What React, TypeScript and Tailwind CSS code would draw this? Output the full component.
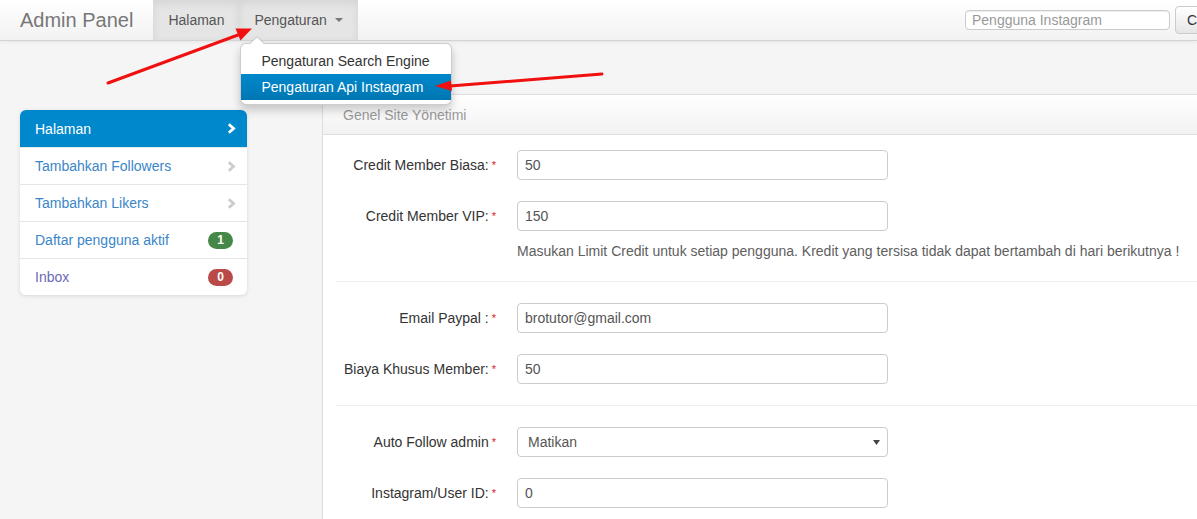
import React from 'react';

type Field = { label: string; value: string; select?: boolean };

const groupA: Field[] = [
  { label: 'Credit Member Biasa:', value: '50' },
  { label: 'Credit Member VIP:', value: '150' },
];

const groupB: Field[] = [
  { label: 'Email Paypal :', value: 'brotutor@gmail.com' },
  { label: 'Biaya Khusus Member:', value: '50' },
];

const groupC: Field[] = [
  { label: 'Auto Follow admin', value: 'Matikan', select: true },
  { label: 'Instagram/User ID:', value: '0' },
];

function Chevron({ color }: { color: string }) {
  return (
    <svg width="9" height="11" viewBox="0 0 9 11" className="shrink-0">
      <path d="M1.8 1.2 L6.6 5.5 L1.8 9.8" fill="none" stroke={color} strokeWidth="2.8" strokeLinejoin="miter" />
    </svg>
  );
}

function FormRow({ field }: { field: Field }) {
  return (
    <div className="flex items-center h-[30px]">
      <label className="w-[173px] text-right text-[#333] whitespace-nowrap">
        {field.label}
        <span className="text-[#e02020] text-[11px] align-top ml-[3px]">*</span>
      </label>
      {field.select ? (
        <div className="ml-[21px] w-[371px] h-[30px] border border-[#ccc] rounded-[4px] bg-white flex items-center justify-between pl-[10px] pr-[7px] text-[#555]">
          <span>{field.value}</span>
          <svg width="7" height="5" viewBox="0 0 7 5">
            <path d="M0 0 H7 L3.5 5 Z" fill="#444" />
          </svg>
        </div>
      ) : (
        <div className="ml-[21px] w-[371px] h-[30px] border border-[#ccc] rounded-[4px] bg-white flex items-center pl-[7px] text-[#555]">
          {field.value}
        </div>
      )}
    </div>
  );
}

const sideItems = [
  { label: 'Tambahkan Followers', chevron: true },
  { label: 'Tambahkan Likers', chevron: true },
  { label: 'Daftar pengguna aktif', badge: '1', badgeColor: 'bg-[#468847]' },
  { label: 'Inbox', badge: '0', badgeColor: 'bg-[#b94a48]', visited: true },
];

export default function App() {
  return (
    <div className="relative w-full h-[519px] overflow-hidden bg-[#f5f5f5] font-['Liberation_Sans',Arial,sans-serif] text-[14px] leading-[20px]">
      {/* Navbar */}
      <div className="relative z-20 h-[41px] flex items-stretch bg-gradient-to-b from-white to-[#f2f2f2] border-b border-[#d4d4d4] shadow-[0_1px_4px_rgba(0,0,0,0.065)]">
        <div className="pl-[20px] pr-[20px] flex items-center text-[20px] text-[#777]">Admin Panel</div>
        <div className="flex items-stretch">
          <div className="px-[15px] flex items-center bg-[#e5e5e5] text-[#555] shadow-[inset_0_3px_8px_rgba(0,0,0,0.08)]">Halaman</div>
          <div className="relative px-[15px] flex items-center bg-[#e5e5e5] text-[#555] shadow-[inset_0_3px_8px_rgba(0,0,0,0.08)]">
            Pengaturan
            <span className="ml-[8px] w-0 h-0 border-l-[4px] border-r-[4px] border-t-[4px] border-l-transparent border-r-transparent border-t-[#777]" />
            {/* Dropdown */}
            <div className="absolute left-[1px] top-[43px] w-[212px] bg-white border border-[rgba(0,0,0,0.2)] rounded-[6px] shadow-[0_5px_10px_rgba(0,0,0,0.2)] py-[4px] text-[#333]">
              <svg width="16" height="8" viewBox="0 0 16 8" className="absolute left-[8px] top-[-8px]">
                <path d="M0.5 8 L8 0.8 L15.5 8" fill="white" stroke="rgba(0,0,0,0.2)" strokeWidth="1" />
              </svg>
              <div className="h-[26px] px-[20px] flex items-center whitespace-nowrap">Pengaturan Search Engine</div>
              <div className="h-[26px] px-[20px] flex items-center whitespace-nowrap text-white bg-gradient-to-b from-[#0088cc] to-[#0077b3]">Pengaturan Api Instagram</div>
            </div>
          </div>
        </div>
        <div className="ml-auto mr-[-38px] flex items-center gap-[5px]">
          <div className="w-[205px] h-[20px] border border-[#ccc] rounded-[4px] bg-white flex items-center pl-[6px] text-[#999] shadow-[inset_0_1px_1px_rgba(0,0,0,0.075)]">
            Pengguna Instagram
          </div>
          <div className="w-[60px] h-[28px] border border-[#ccc] rounded-[4px] bg-gradient-to-b from-white to-[#e6e6e6] flex items-center pl-[11px] text-[#333]">
            Cari
          </div>
        </div>
      </div>

      {/* Body */}
      <div className="flex items-start pl-[20px]">
        {/* Sidebar */}
        <div className="w-[227px] shrink-0 mt-[69px] bg-white rounded-[6px] shadow-[0_1px_4px_rgba(0,0,0,0.12)] overflow-hidden">
          <div className="h-[37px] flex items-center justify-between pl-[15px] pr-[11px] bg-[#0088cc] text-white">
            <span>Halaman</span>
            <Chevron color="#ffffff" />
          </div>
          {sideItems.map((it) => (
            <div key={it.label} className="h-[37px] flex items-center justify-between pl-[15px] pr-[14px] border-t border-[#e5e5e5]">
              <span className={it.visited ? 'text-[#6a6ab8]' : 'text-[#3a86c8]'}>{it.label}</span>
              {it.chevron && (
                <span className="mr-[-3px]">
                  <Chevron color="#cccccc" />
                </span>
              )}
              {it.badge && (
                <span className={`${it.badgeColor} h-[17px] px-[9px] rounded-full text-white text-[12px] font-bold leading-[17px]`}>
                  {it.badge}
                </span>
              )}
            </div>
          ))}
        </div>

        {/* Main panel */}
        <div className="ml-[75px] mt-[53px] w-[900px] shrink-0 bg-white border border-[#ddd] rounded-tl-[4px] h-[480px]">
          <div className="h-[40px] flex items-center pl-[20px] text-[#999] bg-gradient-to-b from-white to-[#f2f2f2] border-b border-[#ddd]">
            Genel Site Yönetimi
          </div>
          <div className="pt-[15px]">
            <div className="flex flex-col gap-[21px]">
              {groupA.map((f) => (
                <FormRow key={f.label} field={f} />
              ))}
            </div>
            <div className="mt-[10px] ml-[194px] text-[#5e5e5e] whitespace-nowrap">
              Masukan Limit Credit untuk setiap pengguna. Kredit yang tersisa tidak dapat bertambah di hari berikutnya !
            </div>
            <div className="mt-[20px] ml-[13px] border-t border-[#eee]" />
            <div className="mt-[21px] flex flex-col gap-[21px]">
              {groupB.map((f) => (
                <FormRow key={f.label} field={f} />
              ))}
            </div>
            <div className="mt-[21px] ml-[13px] border-t border-[#eee]" />
            <div className="mt-[21px] flex flex-col gap-[21px]">
              {groupC.map((f) => (
                <FormRow key={f.label} field={f} />
              ))}
            </div>
          </div>
        </div>
      </div>

      {/* Annotation arrows */}
      <svg className="absolute inset-0 z-30 pointer-events-none" width="1197" height="519" viewBox="0 0 1197 519">
        <line x1="108" y1="83" x2="238" y2="35" stroke="#f01010" strokeWidth="3" strokeLinecap="round" />
        <polygon points="252,28.5 240.5,40.5 235.5,28.5" fill="#f01010" />
        <line x1="602" y1="74" x2="450" y2="86" stroke="#f01010" strokeWidth="3" strokeLinecap="round" />
        <polygon points="435,86 452,91 451,80.5" fill="#f01010" />
      </svg>
    </div>
  );
}
